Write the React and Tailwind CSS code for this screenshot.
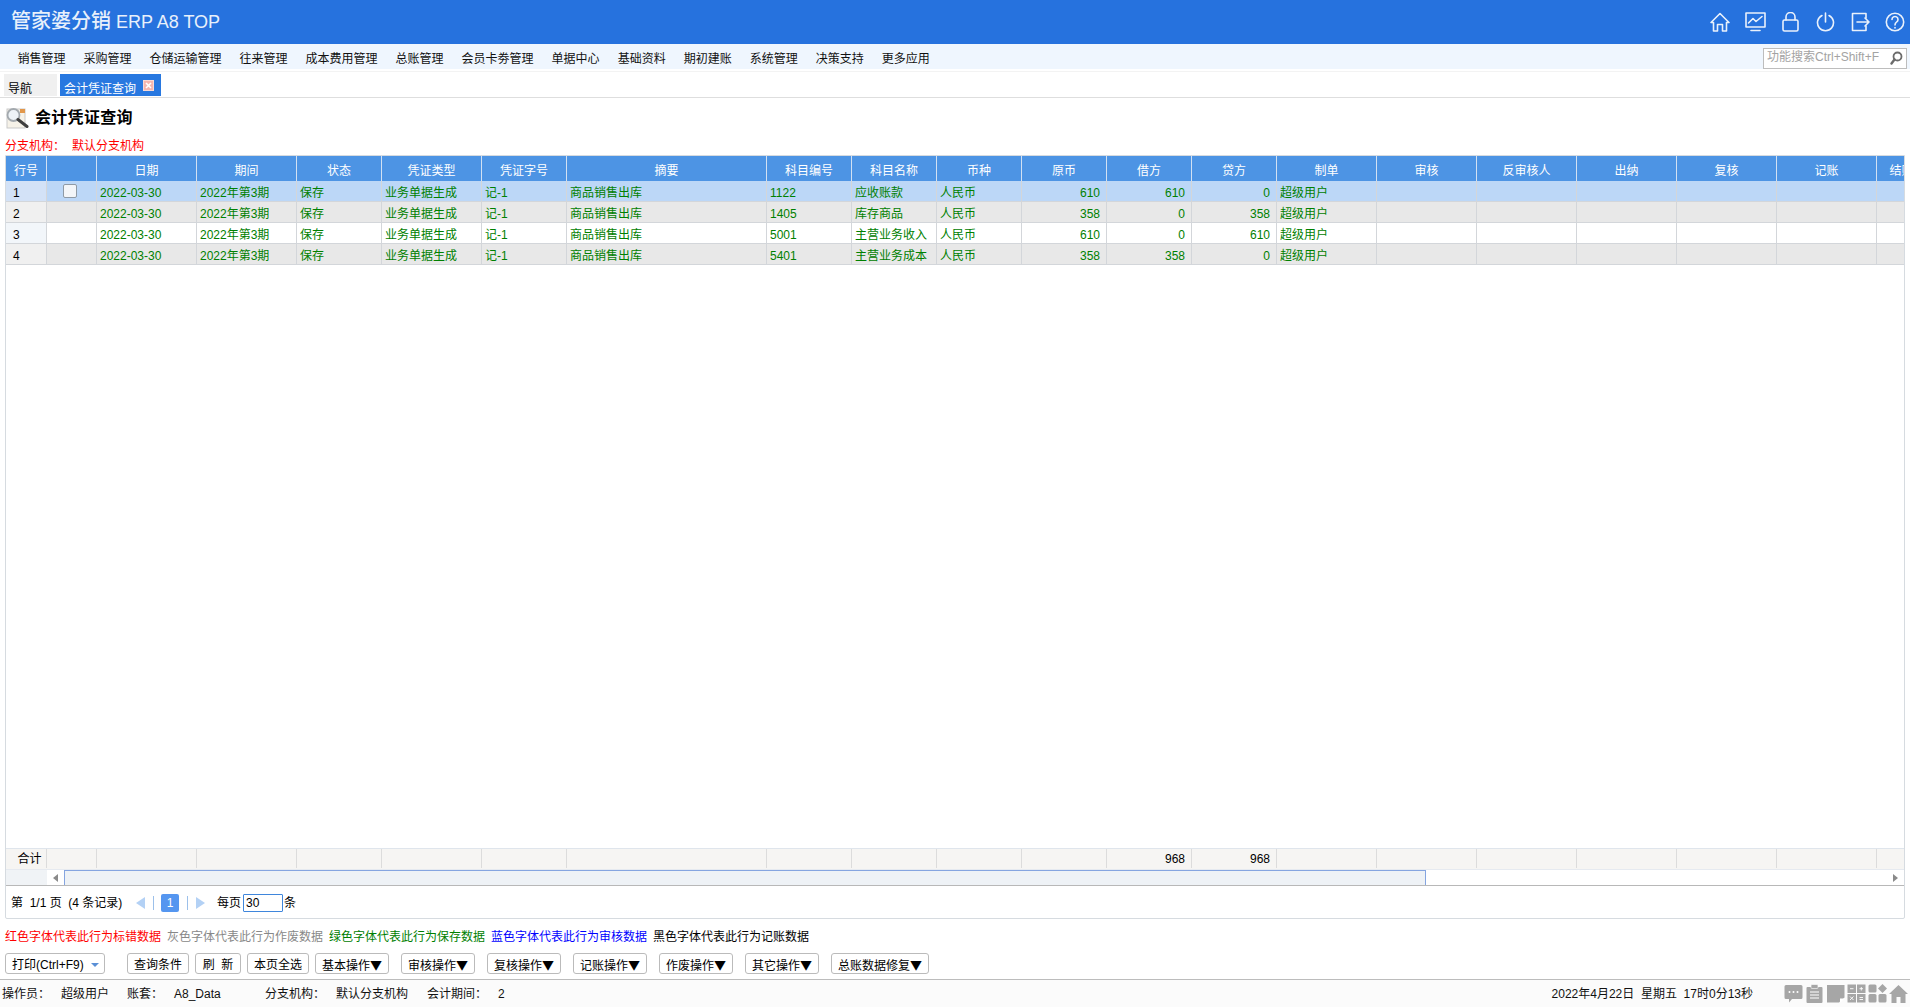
import React from 'react';

const FONT = "font-['Liberation_Sans','Noto_Sans_CJK_SC',sans-serif]";

const menus = ['销售管理','采购管理','仓储运输管理','往来管理','成本费用管理','总账管理','会员卡劵管理','单据中心','基础资料','期初建账','系统管理','决策支持','更多应用'];

const cols = [
  ['行号','w-[41px]'],['','w-[50px]'],['日期','w-[100px]'],['期间','w-[100px]'],['状态','w-[85px]'],['凭证类型','w-[100px]'],['凭证字号','w-[85px]'],['摘要','w-[200px]'],
  ['科目编号','w-[85px]'],['科目名称','w-[85px]'],['币种','w-[85px]'],['原币','w-[85px]'],['借方','w-[85px]'],['贷方','w-[85px]'],['制单','w-[100px]'],['审核','w-[100px]'],
  ['反审核人','w-[100px]'],['出纳','w-[100px]'],['复核','w-[100px]'],['记账','w-[100px]'],['结账','w-[50px]'],
];

const rows = [
  { n: 1, code: '1122', name: '应收账款', yb: '610', j: '610', d: '0', bg: 'bg-[#bcd7f7]', nbg: 'bg-[#d3e2f7]' },
  { n: 2, code: '1405', name: '库存商品', yb: '358', j: '0', d: '358', bg: 'bg-[#e8e8e8]', nbg: 'bg-[#f0f0f0]' },
  { n: 3, code: '5001', name: '主营业务收入', yb: '610', j: '0', d: '610', bg: 'bg-white', nbg: 'bg-[#f2f6fa]' },
  { n: 4, code: '5401', name: '主营业务成本', yb: '358', j: '358', d: '0', bg: 'bg-[#e8e8e8]', nbg: 'bg-[#f0f0f0]' },
];

const buttons = [
  ['查询条件','w-[62px] ml-[22px]',false],['刷  新','w-[46px] ml-[6px]',false],['本页全选','w-[62px] ml-[6px]',false],['基本操作','w-[74px] ml-[6px]',true],['审核操作','w-[74px] ml-[12px]',true],
  ['复核操作','w-[74px] ml-[12px]',true],['记账操作','w-[74px] ml-[12px]',true],['作废操作','w-[74px] ml-[12px]',true],['其它操作','w-[74px] ml-[12px]',true],['总账数据修复','w-[98px] ml-[12px]',true],
];

const TD = "border-r border-b border-[#d3d6da] px-[3px] pt-[3px] whitespace-nowrap overflow-hidden";

function HeaderIcons() {
  const p = { fill: 'none', stroke: 'white', strokeWidth: 1.6, strokeLinejoin: 'round', strokeLinecap: 'round' };
  return (
    <div className="flex items-center ml-auto mr-[5px] opacity-90">
      <svg width="20" height="20" viewBox="0 0 20 20" {...p}><path d="M1 10.500 10 1.500l9 9-2.500 0V19H12.500v-6.500h-5V19H3.500v-8.500z" /></svg>
      <svg className="ml-[15px]" width="21" height="20" viewBox="0 0 21 20" {...p}><rect x="1" y="1" width="19" height="14" /><path d="M3.500 11 8 6.500l3 3L17 4.500" /><path d="M6 18.500h9" /></svg>
      <svg className="ml-[16px]" width="17" height="20" viewBox="0 0 17 20" {...p}><rect x="1" y="8" width="15" height="11" rx="1.500" /><path d="M4 8V5a4.500 4.500 0 0 1 9 0v3" /></svg>
      <svg className="ml-[17px]" width="19" height="20" viewBox="0 0 19 20" {...p}><path d="M6 3.500a8 8 0 1 0 7 0" /><path d="M9.500 1v9" /></svg>
      <svg className="ml-[16px]" width="19" height="20" viewBox="0 0 19 20" {...p}><path d="M15 6V1.500H1.500v17H15V14" /><path d="M6 10h12M14 6l4 4-4 4" /></svg>
      <svg className="ml-[15px]" width="20" height="20" viewBox="0 0 20 20" {...p}><circle cx="10" cy="10" r="8.700" /><path d="M7 7.500a3 3 0 1 1 4.500 2.600c-1 .6-1.500 1.300-1.500 2.900" /><path d="M10 15.500v.4" /></svg>
    </div>
  );
}

function TitleIcon() {
  return (
    <svg width="24" height="22" viewBox="0 0 24 22">
      <rect x="2" y="2" width="18" height="19" fill="#f6f2e8" stroke="#c9c9c9" />
      <rect x="15" y="2" width="5" height="4" fill="#e2974a" />
      <circle cx="8.500" cy="8" r="6" fill="#eef3f7" stroke="#a3a9ae" strokeWidth="1.800" />
      <path d="M13 12.500 22 19.500" stroke="#3f3f3f" strokeWidth="3" strokeLinecap="round" />
    </svg>
  );
}

function StatusIcons() {
  return (
    <div className="flex items-center ml-[31px] gap-[2px] text-[#a6a6a6]">
      <svg width="19" height="19" viewBox="0 0 19 19" fill="currentColor"><path d="M2 1h15a1.500 1.500 0 0 1 1.500 1.500v11A1.500 1.500 0 0 1 17 15H8l-3 3.500V15H2a1.500 1.500 0 0 1-1.500-1.500v-11A1.500 1.500 0 0 1 2 1z" /><circle cx="5.500" cy="8" r="1" fill="white" /><circle cx="9.500" cy="8" r="1" fill="white" /><circle cx="13.500" cy="8" r="1" fill="white" /></svg>
      <svg width="19" height="19" viewBox="0 0 19 19" fill="currentColor"><path d="M2.500 3h14a1 1 0 0 1 1 1v14a1 1 0 0 1-1 1h-14a1 1 0 0 1-1-1V4a1 1 0 0 1 1-1z" /><rect x="6" y="0.500" width="7" height="4" rx="1" stroke="white" strokeWidth=".6" /><path d="M5 8h9M5 11h9M5 14h9" stroke="white" strokeWidth="1.200" /></svg>
      <svg width="19" height="19" viewBox="0 0 19 19" fill="currentColor"><path d="M1 1h17.500v12.500L13 18.500H1z" /><path d="M14 14.500h4v.5l-3.500 3.500H14z" fill="white" /></svg>
      <svg width="19" height="19" viewBox="0 0 19 19" fill="currentColor"><rect x="0.500" y="0.500" width="8.500" height="8.500" /><rect x="10" y="0.500" width="8.500" height="8.500" /><rect x="0.500" y="10" width="8.500" height="8.500" /><rect x="10" y="10" width="8.500" height="8.500" /><path d="M3 4.700h3.500M14.300 3v3.500M12.500 4.700h3.500M3 12.500l3.500 3.500M6.500 12.500 3 16M12.500 13.500H16M12.500 15.500H16" stroke="white" strokeWidth=".9" /></svg>
      <svg width="19" height="19" viewBox="0 0 19 19" fill="currentColor"><rect x="0.500" y="0.500" width="8" height="8" rx="1.500" /><path d="M14.500 0 19 4.500 14.500 9 10 4.500z" /><rect x="0.500" y="10" width="8" height="8.500" rx="1.500" /><rect x="10.500" y="10" width="8" height="8.500" rx="1.500" /></svg>
      <svg width="19" height="19" viewBox="0 0 19 19" fill="currentColor"><path d="M9.500 1 19 10h-2.500v9h-5v-6h-4v6h-5v-9H0z" /></svg>
    </div>
  );
}

export default function App() {
  return (
    <div className={`${FONT} h-[1007px] w-[1910px] overflow-hidden flex flex-col bg-white text-[12px] leading-none text-black`}>
      <header className="h-[44px] shrink-0 bg-[#2672de] flex items-center pl-[11px] text-white">
        <div className="text-[18px] text-[#e8f0fb] leading-none flex items-baseline mt-[-2px]">
          <span className="text-[20px] font-medium mr-[5px]">管家婆分销</span>ERP A8 TOP
        </div>
        <HeaderIcons />
      </header>

      <nav className="h-[25px] shrink-0 bg-[#eff6fe] flex items-center pl-[17.500px] pr-[3px] gap-[18px] text-[#111]">
        {menus.map(m => <span key={m} className="whitespace-nowrap mt-[5px]">{m}</span>)}
        <div className="ml-auto mt-[3px] w-[144px] h-[21px] border border-[#bdbdbd] bg-white flex items-center pl-[3px] pr-[3px] text-[#a3a3a3]">
          <span className="mb-[3px] whitespace-nowrap">功能搜索Ctrl+Shift+F</span>
          <svg className="ml-auto" width="13" height="14" viewBox="0 0 13 14" fill="none"><circle cx="7.500" cy="5.500" r="4" stroke="#6b6b6b" strokeWidth="1.800" /><path d="M4.500 8.500 1.500 12.500" stroke="#6b6b6b" strokeWidth="2.400" strokeLinecap="round" /></svg>
        </div>
      </nav>

      <div className="h-[27px] shrink-0 mt-[2px] border-t border-[#f3f3f3] border-b border-b-[#dedede] pt-[2px] flex pl-[4px] gap-[3px]">
        <div className="w-[53px] h-[22px] bg-[#f0f0f0] pl-[4px] flex items-center"><span className="mt-[8px]">导航</span></div>
        <div className="w-[101px] h-[22px] bg-[#2878e0] text-white pl-[4px] flex items-center">
          <span className="mt-[8px] whitespace-nowrap">会计凭证查询</span>
          <span className="ml-[7px] mt-[1px] w-[11px] h-[11px] bg-[#f5b5ae] border border-[#f8d9d5] flex items-center justify-center">
            <svg width="7" height="7" viewBox="0 0 7 7"><path d="M1 1l5 5M6 1 1 6" stroke="white" strokeWidth="1.600" /></svg>
          </span>
        </div>
      </div>

      <div className="h-[39px] shrink-0 flex items-center pl-[5px] gap-[6px]">
        <TitleIcon />
        <span className="text-[16px] font-bold tracking-[0.3px]">会计凭证查询</span>
      </div>

      <div className="h-[18px] shrink-0 flex items-center pl-[5px] text-[#f00]">
        <span className="w-[67px]">分支机构：</span><span>默认分支机构</span>
      </div>

      <main className="flex-1 min-h-0 ml-[5px] mr-[5px] border border-[#d6dbe0] rounded-b-[2px] flex flex-col">
        <div className="flex-1 min-h-0 overflow-hidden bg-white">
          <table className="table-fixed w-[1921px] border-separate border-spacing-0">
            <colgroup>{cols.map((c, i) => <col key={i} className={c[1]} />)}</colgroup>
            <thead>
              <tr className="h-[25px] bg-[#4d94e4] text-white">
                {cols.map((c, i) => <th key={i} className="font-normal pt-[4px] border-r border-[#d2e1f3] text-center whitespace-nowrap overflow-hidden">{c[0]}</th>)}
              </tr>
            </thead>
            <tbody className="text-[#008000]">
              {rows.map(r => (
                <tr key={r.n} className={`h-[21px] ${r.bg}`}>
                  <td className={`${TD} ${r.nbg} text-black !pl-[7px]`}>{r.n}</td>
                  <td className={`${TD} text-center`}>
                    {r.n === 1 && <span className="inline-block align-middle mr-[3px] mb-[3px] w-[14px] h-[14px] rounded-[2px] border border-[#8f9aa5] bg-[#f3f5f8]" />}
                  </td>
                  <td className={TD}>2022-03-30</td>
                  <td className={TD}>2022年第3期</td>
                  <td className={TD}>保存</td>
                  <td className={TD}>业务单据生成</td>
                  <td className={TD}>记-1</td>
                  <td className={TD}>商品销售出库</td>
                  <td className={TD}>{r.code}</td>
                  <td className={TD}>{r.name}</td>
                  <td className={TD}>人民币</td>
                  <td className={`${TD} text-right !pr-[6px]`}>{r.yb}</td>
                  <td className={`${TD} text-right !pr-[6px]`}>{r.j}</td>
                  <td className={`${TD} text-right !pr-[6px]`}>{r.d}</td>
                  <td className={TD}>超级用户</td>
                  {[0,1,2,3,4,5].map(k => <td key={k} className={TD} />)}
                </tr>
              ))}
            </tbody>
          </table>
        </div>

        <div className="h-[21px] shrink-0 overflow-hidden border-t border-[#dfe5ec] bg-[#f6f5f3]">
          <table className="table-fixed w-[1921px] border-separate border-spacing-0">
            <colgroup>{cols.map((c, i) => <col key={i} className={c[1]} />)}</colgroup>
            <tbody>
              <tr className="h-[19px]">
                {cols.map((c, i) => (
                  <td key={i} className={`border-r border-[#dcdcdc] whitespace-nowrap pt-[1px] px-[6px] ${i === 0 ? 'text-center !pl-[7px] !pr-0' : 'text-right'}`}>
                    {i === 0 ? '合计' : (i === 12 || i === 13 ? '968' : '')}
                  </td>
                ))}
              </tr>
            </tbody>
          </table>
        </div>

        <div className="h-[17px] shrink-0 flex border-t border-[#e6eaf0] border-b border-b-[#b8b8b8] bg-white">
          <div className="w-[41px] bg-[#f0f3f6]" />
          <div className="w-[17px] flex items-center justify-center">
            <span className="w-0 h-0 border-y-[4px] border-y-transparent border-r-[5px] border-r-[#8a8a8a]" />
          </div>
          <div className="w-[1362px] bg-[#eef2f6] border border-[#85a5e0] border-b-0" />
          <div className="ml-auto w-[17px] flex items-center justify-center">
            <span className="w-0 h-0 border-y-[4px] border-y-transparent border-l-[5px] border-l-[#8a8a8a]" />
          </div>
        </div>

        <div className="h-[32px] shrink-0 flex items-center pl-[5px] pt-[1px]">
          <span className="whitespace-pre w-[125px] pt-[1px]">第  1/1 页  (4 条记录)</span>
          <span className="w-0 h-0 border-y-[6px] border-y-transparent border-r-[9px] border-r-[#b3d1f5]" />
          <span className="w-px h-[14px] bg-[#9cc0ea] ml-[8px]" />
          <span className="ml-[7px] w-[18px] h-[18px] rounded-[2px] bg-[#5596f0] text-white flex items-center justify-center">1</span>
          <span className="w-px h-[14px] bg-[#9cc0ea] ml-[8px]" />
          <span className="ml-[8px] w-0 h-0 border-y-[6px] border-y-transparent border-l-[9px] border-l-[#b3d1f5]" />
          <span className="ml-[12px] pt-[1px]">每页</span>
          <span className="ml-[2px] w-[40px] h-[18px] border border-[#3f86dc] rounded-[1px] pl-[2px] flex items-center">30</span>
          <span className="ml-[1px] pt-[1px]">条</span>
        </div>
      </main>

      <div className="h-[26px] shrink-0 flex items-center pl-[5px] pt-[10px] gap-[6px] whitespace-nowrap">
        <span className="text-[#f00]">红色字体代表此行为标错数据</span>
        <span className="text-[#888]">灰色字体代表此行为作废数据</span>
        <span className="text-[#008000]">绿色字体代表此行为保存数据</span>
        <span className="text-[#00f]">蓝色字体代表此行为审核数据</span>
        <span className="text-black">黑色字体代表此行为记账数据</span>
      </div>

      <div className="h-[34px] shrink-0 flex items-start pl-[5px] pt-[8px]">
        <button className="w-[100px] h-[21px] border border-[#bbb] rounded-[3px] bg-white flex items-center pl-[6px] pr-[5px] pt-[3px]">
          <span className="whitespace-nowrap">打印(Ctrl+F9)</span>
          <span className="ml-auto w-0 h-0 border-x-[4px] border-x-transparent border-t-[4px] border-t-[#5a8fd6]" />
        </button>
        {buttons.map(([t, c, arrow]) => (
          <button key={t} className={`${c} h-[21px] border border-[#bbb] rounded-[3px] bg-white text-center whitespace-pre pt-[3px]`}>{t}{arrow && <span className="font-['Noto_Sans_CJK_SC',sans-serif]">▼</span>}</button>
        ))}
      </div>

      <footer className="h-[28px] shrink-0 border-t border-[#bcbcbc] bg-[#fbfbfb] flex items-center pl-[2px] pr-[2px] text-[#111] whitespace-nowrap">
        <span className="w-[59px]">操作员：</span>
        <span className="w-[66px]">超级用户</span>
        <span className="w-[47px]">账套：</span>
        <span className="w-[91px]">A8_Data</span>
        <span className="w-[71px]">分支机构：</span>
        <span className="w-[91px]">默认分支机构</span>
        <span className="w-[71px]">会计期间：</span>
        <span>2</span>
        <span className="ml-auto whitespace-pre">2022年4月22日  星期五  17时0分13秒</span>
        <StatusIcons />
      </footer>
    </div>
  );
}
